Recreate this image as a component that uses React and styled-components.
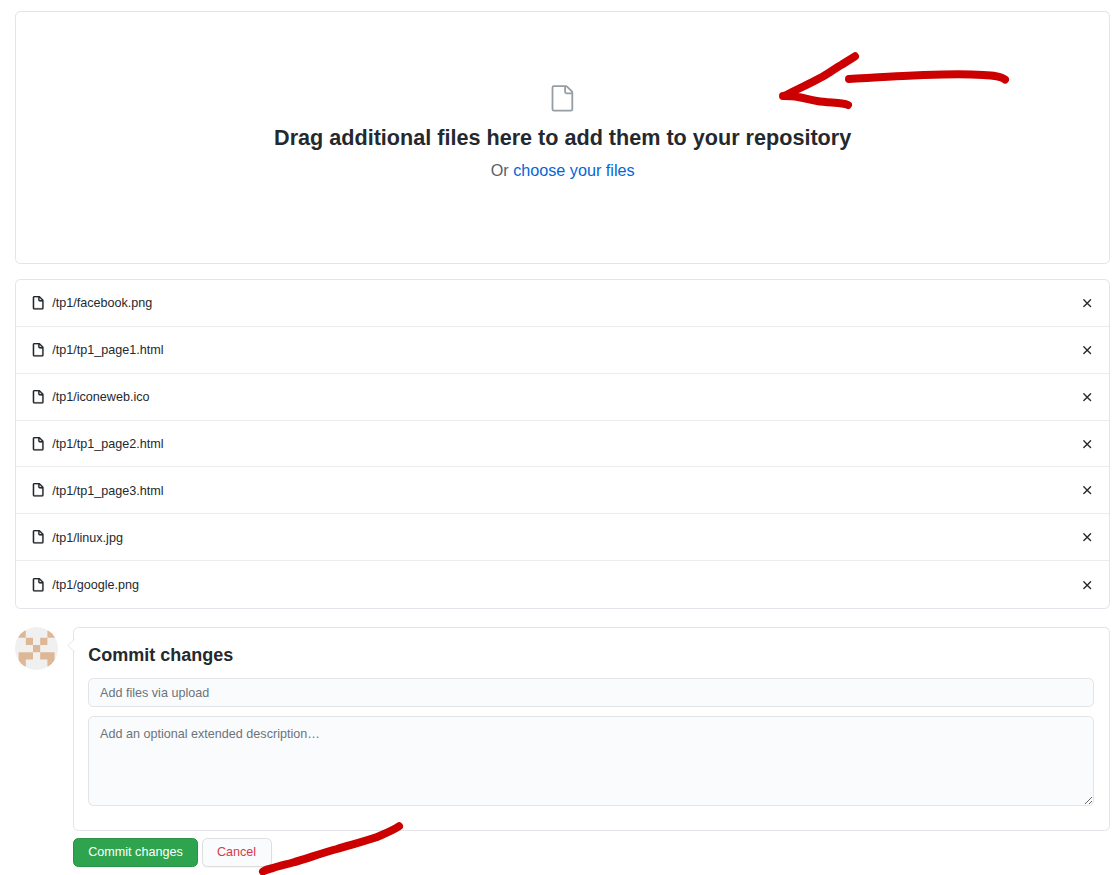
import React from "react";
import styled, { createGlobalStyle } from "styled-components";

const GlobalStyle = createGlobalStyle`
  * { box-sizing: border-box; }
  body {
    margin: 0;
    background: #fff;
    color: #24292e;
    font-family: "Liberation Sans", Arial, sans-serif;
    font-size: 12.6px;
    line-height: 18.9px;
    overflow: hidden;
  }
`;

const Page = styled.main`
  position: relative;
  height: 875px;
  padding: 11px 4px 0 15px;
  overflow: hidden;
`;

const Panel = styled.section`
  border: 1px solid #e1e4e8;
  border-radius: 5.4px;
`;

const DropZone = styled(Panel)`
  height: 253px;
  padding: 72px 0 0 0.3px;
  display: flex;
  flex-direction: column;
  align-items: center;
`;

const DropIcon = styled.svg`
  display: block;
  width: 28.8px;
  height: 28.8px;
  fill: #959da5;
`;

const DropTitle = styled.h2`
  margin: 9px 0 0;
  font-size: 21.6px;
  line-height: 32.4px;
  font-weight: 600;
`;

const DropHint = styled.p`
  margin: 3px 0 0;
  font-size: 16.2px;
  line-height: 27px;
  color: #586069;
`;

const FileLink = styled.a`
  color: #0366d6;
`;

const FileList = styled(Panel)`
  margin-top: 15px;
  height: 330px;
`;

const FileRow = styled.div`
  display: flex;
  align-items: center;
  height: 46.85px;
  padding: 0.6px 15px 0 15px;
  border-bottom: 1px solid #eaecef;
  &:last-child { border-bottom: 0; }
`;

const RowIcon = styled.svg`
  display: block;
  flex: none;
  width: 14.4px;
  height: 14.4px;
  fill: #24292e;
  stroke: #24292e;
  stroke-width: ${(p) => (p.$bold ? 0.2 : 0)};
`;

const FileName = styled.span`
  flex: 1;
  margin-left: 6.8px;
  padding-top: 1.4px;
`;

const CommitArea = styled.div`
  display: flex;
  margin-top: 18px;
`;

const Avatar = styled.svg`
  width: 43.2px;
  height: 43.2px;
  margin-right: 14.8px;
  border-radius: 50%;
  flex: none;
`;

const CommitColumn = styled.div`
  flex: 1;
`;

const CommitPanel = styled(Panel)`
  position: relative;
  height: 204px;
  padding: 14px 15px 0 14px;
`;

const Caret = styled.svg`
  position: absolute;
  left: -7px;
  top: 10px;
  width: 8px;
  height: 15px;
`;

const CommitTitle = styled.h3`
  margin: 0 0 9px;
  padding-left: 0.3px;
  font-size: 18px;
  line-height: 27px;
  font-weight: 600;
`;

const fieldStyle = `
  display: block;
  width: 100%;
  margin: 0;
  border: 1px solid #e1e4e8;
  border-radius: 5.4px;
  background: #fafbfc;
  color: #24292e;
  font: 12.6px/18px "Liberation Sans", Arial, sans-serif;
  outline: none;
  &::placeholder { color: #6a737d; opacity: 1; }
`;

const SummaryInput = styled.input`
  ${fieldStyle}
  height: 29px;
  padding: 0 11px;
`;

const DescriptionInput = styled.textarea`
  ${fieldStyle}
  height: 90px;
  margin-top: 9px;
  padding: 8px 11px;
  resize: vertical;
`;

const Actions = styled.div`
  display: flex;
  gap: 4px;
  margin-top: 7px;
`;

const Button = styled.button`
  width: ${(p) => (p.$primary ? 125 : 70)}px;
  height: 29px;
  padding: 0 ${(p) => (p.$primary ? 0 : 1)}px 1px 0;
  border: 1px solid ${(p) => (p.$primary ? "#2a9147" : "#dcdee0")};
  border-radius: 5.4px;
  background: ${(p) => (p.$primary ? "#2ea44f" : "#fafbfc")};
  color: ${(p) => (p.$primary ? "#fff" : "#d73a49")};
  box-shadow: 0 1px 0 rgba(27, 31, 35, 0.04);
  font: 500 12.6px/18px "Liberation Sans", Arial, sans-serif;
  white-space: nowrap;
`;

const Annotations = styled.svg`
  position: absolute;
  left: 0;
  top: 0;
  pointer-events: none;
  fill: none;
  stroke: #cc0000;
  stroke-width: 8;
  stroke-linecap: round;
  stroke-linejoin: round;
`;

const files = [
  "/tp1/facebook.png",
  "/tp1/tp1_page1.html",
  "/tp1/iconeweb.ico",
  "/tp1/tp1_page2.html",
  "/tp1/tp1_page3.html",
  "/tp1/linux.jpg",
  "/tp1/google.png",
];

const FileIcon = () => (
  <RowIcon $bold viewBox="0 0 16 16" aria-hidden="true">
    <path fillRule="evenodd" d="M3.75 1.5a.25.25 0 00-.25.25v11.5c0 .138.112.25.25.25h8.5a.25.25 0 00.25-.25V6H9.75A1.75 1.75 0 018 4.25V1.5H3.75zm5.75.56v2.19c0 .138.112.25.25.25h2.19L9.5 2.06zM2 1.75C2 .784 2.784 0 3.75 0h5.086c.464 0 .909.184 1.237.513l3.414 3.414c.329.328.513.773.513 1.237v8.086A1.75 1.75 0 0112.25 15h-8.5A1.75 1.75 0 012 13.25V1.75z" />
  </RowIcon>
);

const RemoveIcon = () => (
  <RowIcon viewBox="0 0 16 16" aria-hidden="true">
    <path fillRule="evenodd" d="M3.72 3.72a.75.75 0 011.06 0L8 6.94l3.22-3.22a.75.75 0 111.06 1.06L9.06 8l3.22 3.22a.75.75 0 11-1.06 1.06L8 9.06l-3.22 3.22a.75.75 0 01-1.06-1.06L6.94 8 3.72 4.78a.75.75 0 010-1.06z" />
  </RowIcon>
);

export default function App() {
  return (
    <>
      <GlobalStyle />
      <Page>
        <DropZone>
          <DropIcon viewBox="0 0 24 24" aria-hidden="true">
            <path fillRule="evenodd" d="M5 2.5a.5.5 0 00-.5.5v18a.5.5 0 00.5.5h14a.5.5 0 00.5-.5V8.5h-4a2 2 0 01-2-2v-4H5zm10 0v4a.5.5 0 00.5.5h4a.5.5 0 00-.146-.336l-4.018-4.018A.5.5 0 0015 2.5zM3 3a2 2 0 012-2h9.982a2 2 0 011.414.586l4.018 4.018A2 2 0 0121 7.018V21a2 2 0 01-2 2H5a2 2 0 01-2-2V3z" />
          </DropIcon>
          <DropTitle>Drag additional files here to add them to your repository</DropTitle>
          <DropHint>
            Or <FileLink>choose your files</FileLink>
          </DropHint>
        </DropZone>

        <FileList>
          {files.map((name) => (
            <FileRow key={name}>
              <FileIcon />
              <FileName>{name}</FileName>
              <RemoveIcon />
            </FileRow>
          ))}
        </FileList>

        <CommitArea>
          <Avatar viewBox="0 0 12 12">
            <rect width="12" height="12" fill="#f0f0f0" />
            <path fill="#deb896" d="M1 1h2v2H1zM9 1h2v2H9zM3 3h2v2H3zM7 3h2v2H7zM5 5h2v2H5zM1 7h4v2H1zM7 7h4v2H7zM1 9h2v2H1zM9 9h2v2H9z" />
          </Avatar>
          <CommitColumn>
            <CommitPanel>
              <Caret viewBox="0 0 8 15">
                <path d="M8 .5L1 7.5l7 7z" fill="#fff" />
                <path d="M7.500 1L1 7.500 7.500 14" fill="none" stroke="#e1e4e8" />
              </Caret>
              <CommitTitle>Commit changes</CommitTitle>
              <SummaryInput placeholder="Add files via upload" />
              <DescriptionInput placeholder="Add an optional extended description…" />
            </CommitPanel>
            <Actions>
              <Button $primary>Commit changes</Button>
              <Button>Cancel</Button>
            </Actions>
          </CommitColumn>
        </CommitArea>

        <Annotations width="1114" height="875" viewBox="0 0 1114 875">
          <path d="M855 56.300L842 64.500C834 69 828 74 820 78C810 83.500 800 88 793 91.500C788 94 786 96 783 96C789 96 793 96 798 97C806 98.500 810 100 817 101C826 102.500 834 102.500 842 103.500Q846 104 848 105" />
          <path d="M849 79C867 78 885 76.800 903 76C917 75.300 930 74.800 943 74.500C957 74.200 970 74.200 983 75C992 75.500 1001 76 1005 79.500" />
          <path d="M399 826.300C392 831 384 834 377 837C364 841.500 350 845 337 849C322 853 307 858.500 293 862.500C286 864.500 279 866 273 868Q266 869.500 263 871.500" />
        </Annotations>
      </Page>
    </>
  );
}
